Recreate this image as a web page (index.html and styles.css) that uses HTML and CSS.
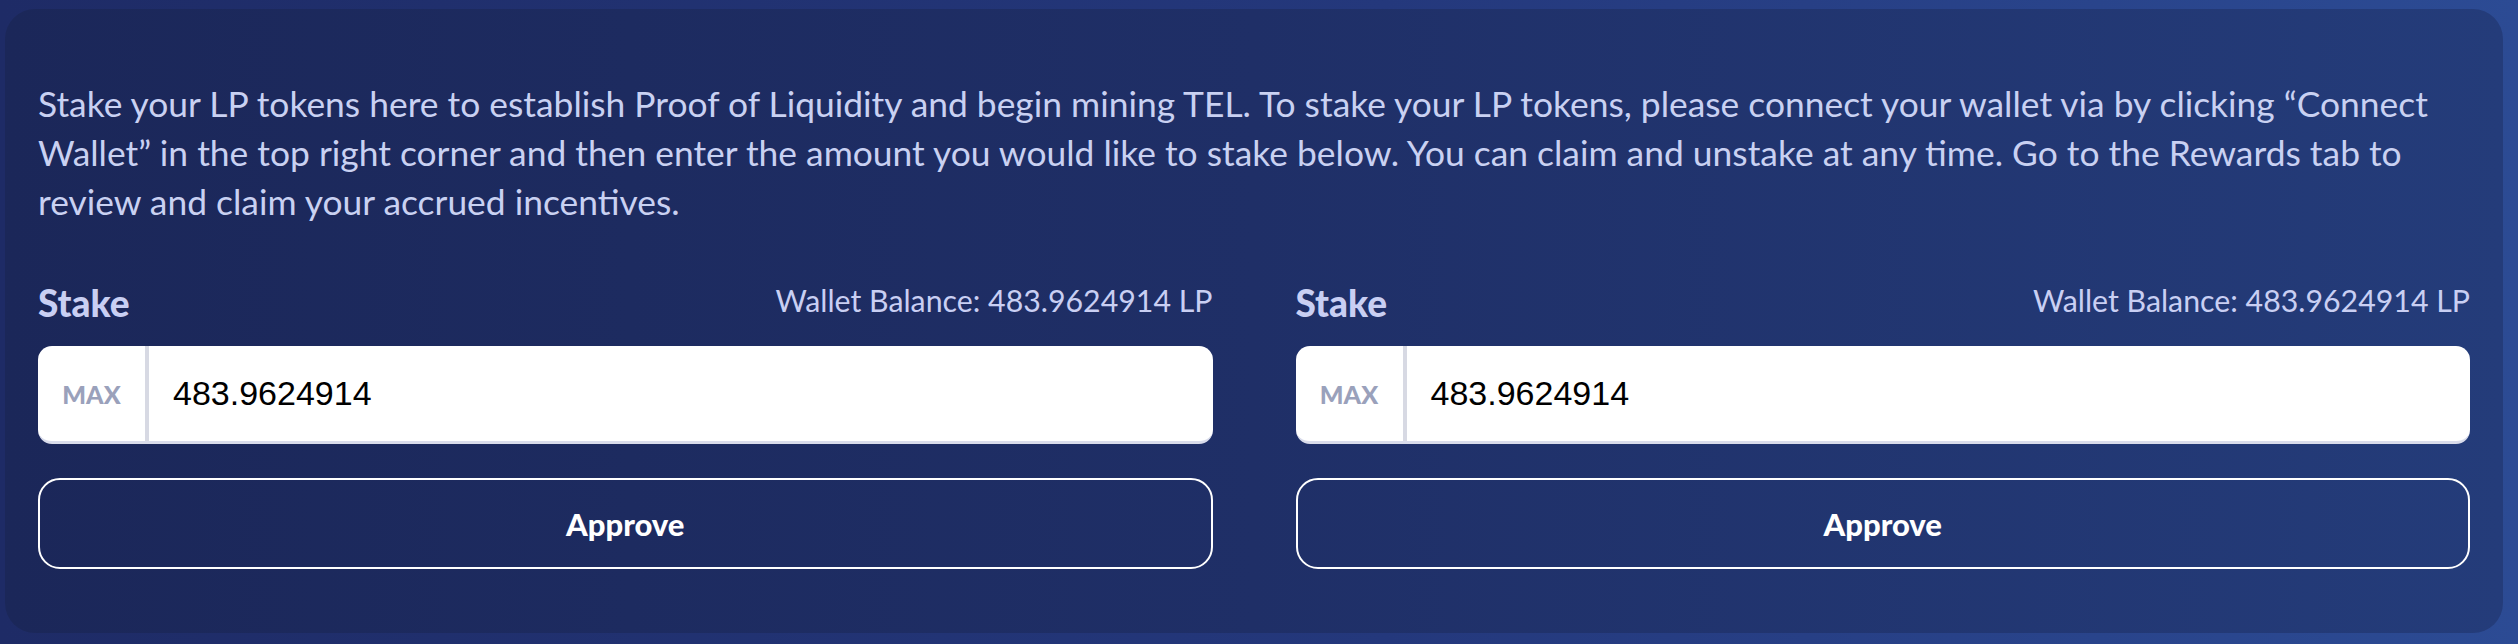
FILE: index.html
```html
<!DOCTYPE html>
<html lang="en">
<head>
<meta charset="utf-8">
<title>Stake</title>
<link rel="stylesheet" href="styles.css">
</head>
<body>
<div class="card">
  <p class="intro">Stake your LP tokens here to establish Proof of Liquidity and begin mining TEL. To stake your LP tokens, please connect your wallet via by clicking “Connect Wallet” in the top right corner and then enter the amount you would like to stake below. You can claim and unstake at any time. Go to the Rewards tab to review and claim your accrued incentives.</p>
  <div class="columns">
    <div class="col">
      <div class="head">
        <span class="label">Stake</span>
        <span class="balance">Wallet Balance: 483.9624914 LP</span>
      </div>
      <div class="field">
        <span class="max">MAX</span>
        <span class="value">483.9624914</span>
      </div>
      <button class="approve">Approve</button>
    </div>
    <div class="col">
      <div class="head">
        <span class="label">Stake</span>
        <span class="balance">Wallet Balance: 483.9624914 LP</span>
      </div>
      <div class="field">
        <span class="max">MAX</span>
        <span class="value">483.9624914</span>
      </div>
      <button class="approve">Approve</button>
    </div>
  </div>
</div>
</body>
</html>
```
FILE: styles.css
```css
html, body {
  margin: 0;
  padding: 0;
}
body {
  width: 2518px;
  height: 644px;
  background: linear-gradient(90deg, #1e2b66 0%, #24387c 55%, #2c4b94 100%);
  font-family: Lato, "Noto Sans", sans-serif;
  overflow: hidden;
}
.card {
  margin: 9px 15px 0 5px;
  height: 624px;
  box-sizing: border-box;
  border-radius: 30px;
  background: linear-gradient(90deg, #1b2759 0%, #1f2f67 50%, #243c7a 100%);
  padding: 70px 33px 0 33px;
}
.intro {
  margin: 0;
  color: #c9d1f2;
  font-size: 35.4px;
  line-height: 49px;
}
.columns {
  display: grid;
  grid-template-columns: 1fr 1fr;
  column-gap: 83px;
  margin-top: 54px;
}
.col {
  display: flex;
  flex-direction: column;
}
.head {
  display: flex;
  justify-content: space-between;
  align-items: center;
  height: 40px;
}
.label {
  color: #c9cff3;
  font-weight: 900;
  font-size: 37px;
  margin-top: 4px;
}
.balance {
  color: #c9cff3;
  font-size: 30.3px;
}
.field {
  margin-top: 26px;
  height: 98px;
  box-sizing: border-box;
  background: #fff;
  border-radius: 14px;
  border-bottom: 3px solid #d9dceb;
  display: flex;
  align-items: center;
}
.max {
  width: 111px;
  height: 100%;
  box-sizing: border-box;
  border-right: 4px solid #d7d9e3;
  display: flex;
  align-items: center;
  justify-content: center;
  color: #9aa1bb;
  font-weight: 900;
  font-size: 25px;
}
.value {
  padding-left: 24px;
  color: #000;
  font-family: "Liberation Sans", Arial, sans-serif;
  font-size: 34px;
}
.approve {
  margin-top: 34px;
  height: 91px;
  border: 2px solid #ffffff;
  border-radius: 22px;
  background: transparent;
  color: #ffffff;
  font-family: Lato, "Noto Sans", sans-serif;
  font-weight: 900;
  font-size: 31px;
}
```
